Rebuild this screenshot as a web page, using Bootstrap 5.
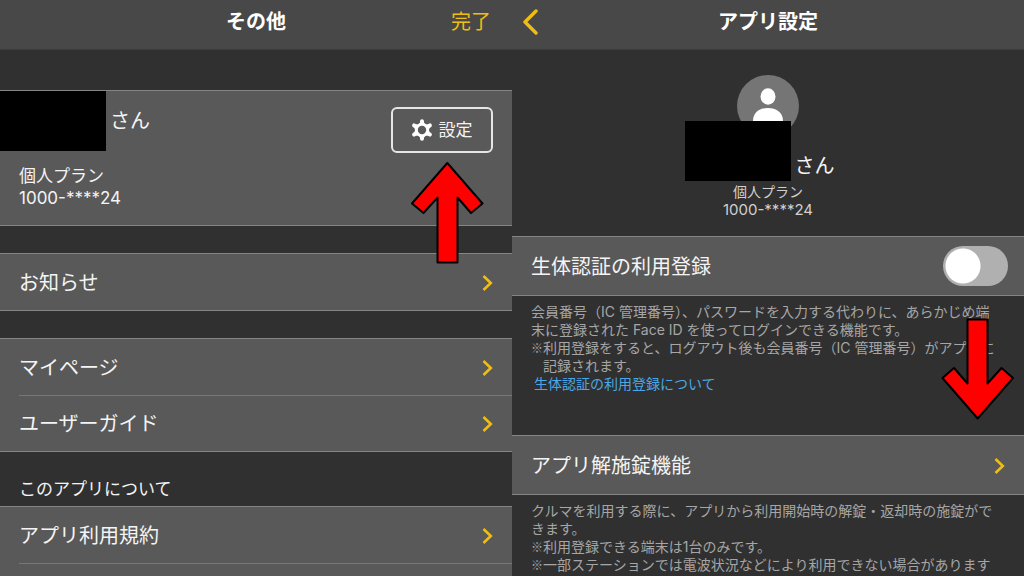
<!DOCTYPE html>
<html lang="ja">
<head>
<meta charset="utf-8">
<meta name="viewport" content="width=device-width, initial-scale=1">
<title>アプリ設定</title>
<link href="https://cdn.jsdelivr.net/npm/bootstrap@5.3.0/dist/css/bootstrap.min.css" rel="stylesheet">
<style>
  body { background: #303030; color: #f4f4f4; font-family: Inter, "Noto Sans CJK JP", sans-serif; font-size: 20px; line-height: 30px; }
  .pane { background: #303030; }
  .topbar { background: #484848; border-bottom: 1px solid #3c3c3c; height: 50px; padding: 0 21px 6px; }
  .topbar h1 { font-size: 20px; line-height: 30px; color: #fff; }
  .side { flex: 1 1 0; line-height: 30px; }
  .back-icon { margin-left: -12px; }
  .accent { color: #f0bd12; }
  .panel { background: #595959; border-top: 1px solid #858585; border-bottom: 1px solid #858585; }
  .profile { margin-top: 40px; height: 136px; }
  .mask { background: #000; width: 106px; height: 60px; }
  .plan { font-size: 17px; line-height: 22px; padding: 14px 19px 0; }
  .settings-btn { --bs-btn-color: #f4f4f4; --bs-btn-border-color: #e6e6e6; --bs-btn-border-width: 2px; --bs-btn-border-radius: 6px; --bs-btn-font-size: 17px; --bs-btn-padding-x: 0; --bs-btn-padding-y: 0; --bs-btn-hover-color: #fff; --bs-btn-hover-border-color: #fff; width: 102px; height: 46px; margin: 16px 19px 0 0; }
  .settings-btn span { padding: 2px 2px 0 5px; }
  .menu-row { height: 56px; padding: 2px 19px 0; color: #f4f4f4; }
  .menu-row + .menu-row::before { content: ""; position: absolute; top: 0; left: 19px; right: 0; border-top: 1px solid #777; }
  .group { margin-top: 27px; }
  .group-label { font-size: 17px; line-height: 26px; padding: 24px 19px 4px; }
  .arrow { position: absolute; pointer-events: none; z-index: 2; }
  .arrow-up { right: 28px; top: 70px; }
  .arrow-down { right: 9px; top: 21px; }
  .account { padding-top: 25px; height: 186px; }
  .name-row { margin-top: -16px; padding-right: 17px; }
  .account-plan { font-size: 14px; line-height: 18px; color: #d0d0d0; padding-top: 2px; }
  .account-num { font-size: 15px; }
  .setting-row { height: 60px; padding: 2px 19px 0; color: #f4f4f4; }
  .note { font-size: 14px; line-height: 18px; color: #a6a6a6; padding: 7px 19px 0; }
  .note-first { height: 139px; }
  .hang { padding-left: 12px; text-indent: -12px; }
  .kome { font-family: "Noto Sans CJK JP", sans-serif; font-size: 12px; line-height: 1; }
  .note a { color: #4aa8e8; margin-left: 3px; }
  .form-check-input.toggle { width: 65px; height: 40px; margin: -2px -3px 0 0; border: 0; border-radius: 20px; background: radial-gradient(circle at 20px 20px, #fff 17px, #b0b0b0 18px); }
  .form-check-input.toggle:checked { background: radial-gradient(circle at 45px 20px, #fff 17px, #f0bd12 18px); }
</style>
</head>
<body>
<svg class="d-none" aria-hidden="true">
  <symbol id="chev" viewBox="0 0 11 18"><path d="M1.5 2 L8.8 9 L1.5 16" fill="none" stroke="#f0bd12" stroke-width="2.6"/></symbol>
</svg>
<main class="row row-cols-2 g-0 vh-100 overflow-hidden">
  <section class="col pane">
    <header class="topbar d-flex align-items-center">
      <span class="side"></span>
      <h1 class="m-0 fw-bold">その他</h1>
      <a href="#" class="side accent text-end text-decoration-none">完了</a>
    </header>

    <div class="profile panel position-relative d-flex justify-content-between align-items-start">
      <div>
        <div class="d-flex align-items-center"><div class="mask me-1"></div><span>さん</span></div>
        <div class="plan">個人プラン<br>1000-****24</div>
      </div>
      <button type="button" class="btn settings-btn d-flex align-items-center justify-content-center">
        <svg width="24" height="24" viewBox="-12 -12 24 24" aria-hidden="true">
          <g stroke="#fff" stroke-width="4" stroke-linecap="round">
            <path d="M0-8.800V-6M0 8.800V6M7.900-4.600 5-3M-7.900 4.600-5 3M7.900 4.600 5 3M-7.900-4.600-5-3"/>
          </g>
          <path d="M0-9.500 3.500-6 8.300-4.800 7 0 8.300 4.800 3.500 6 0 9.500-3.500 6-8.300 4.800-7 0-8.300-4.800-3.500-6Z" fill="#fff"/>
          <circle r="4.200" fill="#595959"/>
        </svg><span>設定</span>
      </button>
      <svg class="arrow arrow-up" width="74" height="104" viewBox="410 161 74 104" aria-hidden="true"><path d="M447.300 163 482.500 203.500 471 213 457.500 197.500V262.500H437.500V197.500L423.500 213 412 203.500Z" fill="#f00" stroke="#000" stroke-width="2" stroke-linejoin="round"/></svg>
    </div>

    <nav class="panel group">
      <a href="#" class="menu-row position-relative d-flex align-items-center justify-content-between text-decoration-none">お知らせ<svg width="11" height="18"><use href="#chev"/></svg></a>
    </nav>
    <nav class="panel group">
      <a href="#" class="menu-row position-relative d-flex align-items-center justify-content-between text-decoration-none">マイページ<svg width="11" height="18"><use href="#chev"/></svg></a>
      <a href="#" class="menu-row position-relative d-flex align-items-center justify-content-between text-decoration-none">ユーザーガイド<svg width="11" height="18"><use href="#chev"/></svg></a>
    </nav>
    <h2 class="group-label m-0 fw-normal">このアプリについて</h2>
    <nav class="panel">
      <a href="#" class="menu-row position-relative d-flex align-items-center justify-content-between text-decoration-none">アプリ利用規約<svg width="11" height="18"><use href="#chev"/></svg></a>
      <a href="#" class="menu-row position-relative d-flex" aria-label="次の項目"></a>
    </nav>
  </section>

  <section class="col pane">
    <header class="topbar d-flex align-items-center">
      <a href="#" class="side" aria-label="戻る"><svg class="d-block back-icon" width="18" height="26" viewBox="0 0 18 26"><path d="M15 2 4 13 15 24" fill="none" stroke="#f0bd12" stroke-width="3.400" stroke-linecap="round" stroke-linejoin="round"/></svg></a>
      <h1 class="m-0 fw-bold">アプリ設定</h1>
      <span class="side"></span>
    </header>

    <div class="account d-flex flex-column align-items-center">
      <svg width="62" height="62" viewBox="0 0 62 62" class="flex-shrink-0" aria-hidden="true"><circle cx="31" cy="31" r="31" fill="#757575"/><ellipse cx="31" cy="21.500" rx="7.500" ry="8.300" fill="#fff"/><path d="M16 46C16 37 23 33 31 33S46 37 46 46Z" fill="#fff"/></svg>
      <div class="name-row d-flex align-items-end position-relative"><div class="mask"></div><span class="ps-1">さん</span></div>
      <div class="account-plan text-center">個人プラン<br><span class="account-num">1000-****24</span></div>
    </div>

    <div class="panel setting-row d-flex align-items-center justify-content-between">
      <label for="bio">生体認証の利用登録</label>
      <input class="form-check-input toggle" type="checkbox" role="switch" id="bio">
    </div>
    <div class="note note-first position-relative">
      <p class="m-0">会員番号（IC 管理番号）、パスワードを入力する代わりに、あらかじめ端<br>末に登録された Face ID を使ってログインできる機能です。</p>
      <p class="m-0 hang"><span class="kome">※</span>利用登録をすると、ログアウト後も会員番号（IC 管理番号）がアプリに記録されます。</p>
      <a href="#" class="text-decoration-none">生体認証の利用登録について</a>
      <svg class="arrow arrow-down" width="74" height="104" viewBox="941 316 74 104" aria-hidden="true"><path d="M967.500 318.500H987.500V382.500L1001.500 367 1013 377 977.700 417.500 942.500 377 954 367 967.500 382.500Z" fill="#f00" stroke="#000" stroke-width="2" stroke-linejoin="round"/></svg>
    </div>

    <a href="#" class="panel setting-row d-flex align-items-center justify-content-between text-decoration-none">アプリ解施錠機能<svg width="11" height="18"><use href="#chev"/></svg></a>
    <div class="note">
      <p class="m-0">クルマを利用する際に、アプリから利用開始時の解錠・返却時の施錠ができます。</p>
      <p class="m-0 hang"><span class="kome">※</span>利用登録できる端末は1台のみです。</p>
      <p class="m-0 hang"><span class="kome">※</span>一部ステーションでは電波状況などにより利用できない場合があります</p>
    </div>
  </section>
</main>
<script src="https://cdn.jsdelivr.net/npm/bootstrap@5.3.0/dist/js/bootstrap.bundle.min.js"></script>
</body>
</html>
